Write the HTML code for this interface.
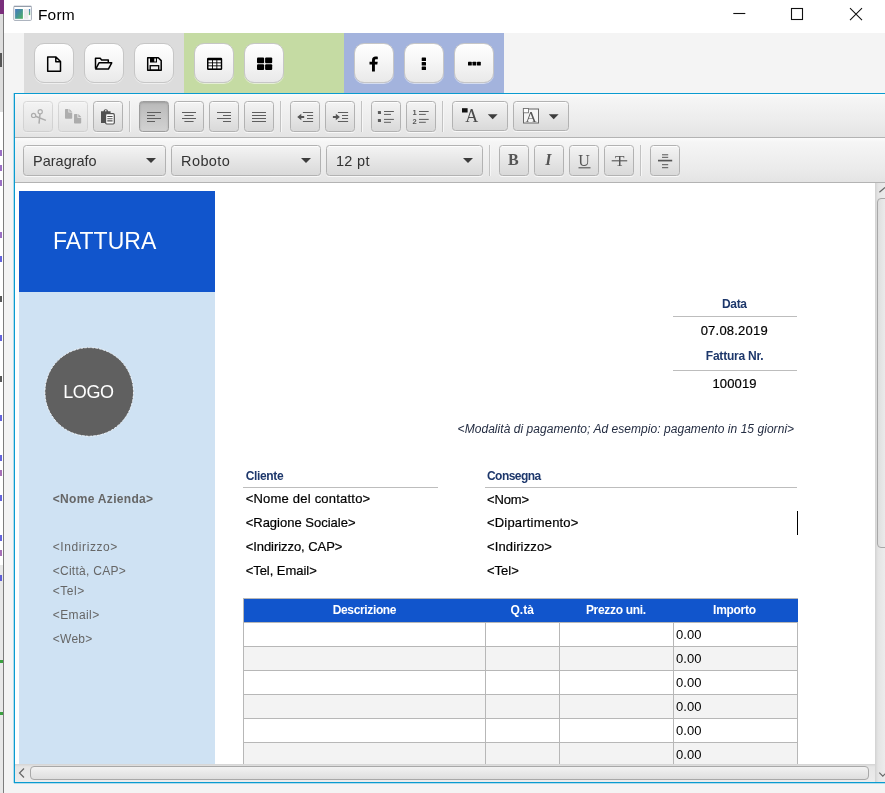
<!DOCTYPE html>
<html lang="it">
<head>
<meta charset="utf-8">
<title>Form</title>
<style>
*{box-sizing:border-box;margin:0;padding:0}
html,body{width:885px;height:793px;overflow:hidden;background:#f4f4f4;font-family:"Liberation Sans",sans-serif}
.abs{position:absolute}
#root{will-change:transform;position:relative;width:885px;height:793px;overflow:hidden;background:#f4f4f4}
#strip{left:0;top:0;width:4px;height:793px;background:#f0f0f0}
#strip i{position:absolute;left:0;display:block}
#title{left:4px;top:0;width:881px;height:33px;background:#fff}
#title .cap{left:34px;top:5px;font-size:15.5px;color:#000;line-height:20px;letter-spacing:.15px}
.panel{top:33px;height:60px;width:160px}
.rb{position:absolute;top:10px;width:40px;height:40px;border:1px solid #c6c6c6;border-radius:10px;background:linear-gradient(#ffffff,#f6f6f6 45%,#e9e9e9);box-shadow:0 1px 0 rgba(255,255,255,.55)}
.rb svg{position:absolute;left:-1px;top:-1px}
#ed{left:14px;top:93px;width:880px;height:690px;border:1px solid #0a9bd0;border-right:0;background:#fff;box-shadow:-1px 0 0 rgba(3,158,211,.28)}
.tb{left:15px;width:870px;background:linear-gradient(#fbfbfb,#f5f5f5 10%,#ebebeb 70%,#e4e4e4);border-bottom:1px solid #b3b3b3}
.btn{position:absolute;top:7px;width:30px;height:31px;border:1px solid #b2b2b2;border-radius:3.5px;background:linear-gradient(#f4f4f4,#e6e6e6 50%,#d9d9d9);box-shadow:inset 0 1px 0 rgba(255,255,255,.8),0 1px 0 rgba(255,255,255,.7)}
.btn.sel{background:linear-gradient(#b9b9b9,#c6c6c6 50%,#d2d2d2);border-color:#9d9d9d;box-shadow:inset 0 1px 2px rgba(0,0,0,.15),0 1px 0 rgba(255,255,255,.7)}
.btn.dis{opacity:.42}
.btn svg{position:absolute;left:-1px;top:-1px}
.sep{position:absolute;top:7px;width:2px;height:31px;border-left:1px solid #c2c2c2;border-right:1px solid #f6f6f6}
.combo{position:absolute;top:7px;height:31px;border:1px solid #b2b2b2;border-radius:3.5px;background:linear-gradient(#f4f4f4,#e6e6e6 50%,#d9d9d9);box-shadow:inset 0 1px 0 rgba(255,255,255,.8),0 1px 0 rgba(255,255,255,.7);font-size:14.5px;color:#333;line-height:31px;padding-left:9px;white-space:nowrap}
.combo b{position:absolute;right:9px;top:12px;width:0;height:0;border-left:5px solid transparent;border-right:5px solid transparent;border-top:5px solid #3c3c3c}
#doc{left:15px;top:183px;width:860px;height:581px;background:#fff;overflow:hidden}
#doc .t{position:absolute;white-space:nowrap;line-height:16px;font-size:13px;color:#000}
#doc .t.r{-webkit-text-stroke:.2px currentColor}
#doc .hd{color:#1d376b;font-weight:bold}
#doc .side{color:#666;font-size:12px}
.ln{position:absolute;height:1px;background:#bdbdbd}
/*EXTRA*/
</style>
</head>
<body>
<div id="root">
<div id="strip" class="abs"><i style="top:0;width:4px;height:14px;background:#7a2f7c"></i><i style="top:14px;width:3px;height:98px;background:#dedede"></i><i style="top:112px;width:3px;height:453px;background:#fff"></i><i style="top:565px;width:3px;height:228px;background:#e8e8e8"></i><i style="top:14px;left:3px;width:1px;height:779px;background:#7d7d7d"></i><i style="top:53px;width:2px;height:14px;background:#555"></i><i style="top:150px;width:2px;height:6px;background:#7a3fb0;opacity:.75"></i><i style="top:165px;width:2px;height:6px;background:#7a3fb0;opacity:.75"></i><i style="top:180px;width:2px;height:6px;background:#7a3fb0;opacity:.75"></i><i style="top:232px;width:2px;height:6px;background:#7a3fb0;opacity:.75"></i><i style="top:256px;width:2px;height:6px;background:#3030d0;opacity:.75"></i><i style="top:296px;width:2px;height:6px;background:#222;opacity:.75"></i><i style="top:335px;width:2px;height:6px;background:#3030d0;opacity:.75"></i><i style="top:376px;width:2px;height:6px;background:#222;opacity:.75"></i><i style="top:415px;width:2px;height:6px;background:#3030d0;opacity:.75"></i><i style="top:455px;width:2px;height:6px;background:#3030d0;opacity:.75"></i><i style="top:470px;width:2px;height:6px;background:#8a3fa0;opacity:.75"></i><i style="top:495px;width:2px;height:6px;background:#3030d0;opacity:.75"></i><i style="top:535px;width:2px;height:6px;background:#3030d0;opacity:.75"></i><i style="top:550px;width:2px;height:6px;background:#8a3fa0;opacity:.75"></i><i style="top:575px;width:2px;height:6px;background:#3030d0;opacity:.75"></i><i style="top:660px;width:3px;height:3px;background:#3aa040"></i><i style="top:712px;width:3px;height:3px;background:#3aa040"></i></div>
<div id="title" class="abs">
  <svg class="abs" style="left:9px;top:5px" width="20" height="17" viewBox="0 0 20 17"><defs><linearGradient id="g1" x1="0" y1="0" x2="1" y2="1"><stop offset="0" stop-color="#4a78c0"/><stop offset=".45" stop-color="#44909a"/><stop offset="1" stop-color="#52b45c"/></linearGradient><linearGradient id="g2" x1="0" y1="0" x2="0" y2="1"><stop offset="0" stop-color="#4a78c8"/><stop offset="1" stop-color="#5cbc5c"/></linearGradient></defs><rect x=".8" y="1.400" width="17.600" height="14" rx=".8" fill="#fff" stroke="#a4acb8" stroke-width="1"/><path d="M.8 1.300h17.600" stroke="#8d96a4" stroke-width="1"/><rect x="2.100" y="4" width="7.800" height="9.800" fill="url(#g1)"/><rect x="10.900" y="4" width="4.400" height="9.800" fill="#ebebeb"/><rect x="15.850" y="4" width="1.350" height="6.100" fill="url(#g2)"/></svg>
  <div class="abs cap">Form</div>
  <svg class="abs" style="left:720px;top:0" width="161" height="33" viewBox="0 0 161 33" fill="none" stroke="#111" stroke-width="1.100"><path d="M9.300 13.500h12"/><rect x="67.500" y="8.500" width="11" height="11"/><path d="M126 8.200l12 12M138 8.200l-12 12"/></svg>
</div>

<div class="abs panel" style="left:24px;background:#dcdcdc">
  <div class="rb" style="left:10px"><svg width="40" height="40" viewBox="0 0 40 40"><path d="M13.700 14h8.300l4.500 4.500v9.700h-12.800z M21.800 14.200v4.600h4.600" fill="none" stroke="#000" stroke-width="1.500" stroke-linejoin="round"/></svg></div>
  <div class="rb" style="left:60px"><svg width="40" height="40" viewBox="0 0 40 40"><path d="M11.500 25.500v-10.200h4.700l1.400 1.700h6.700v2.600" fill="none" stroke="#000" stroke-width="1.500" stroke-linejoin="round"/><path d="M11.700 26.100l3.300-6.300h12.700l-3.300 6.300z" fill="none" stroke="#000" stroke-width="1.500" stroke-linejoin="round"/></svg></div>
  <div class="rb" style="left:110px"><svg width="40" height="40" viewBox="0 0 40 40"><path d="M13.700 14.700h10.600l2.900 2.900v9.700h-13.500z" fill="none" stroke="#000" stroke-width="1.500" stroke-linejoin="round"/><rect x="16" y="14.500" width="7" height="5" fill="#000"/><rect x="20.300" y="15.500" width="1.600" height="3" fill="#fff"/><rect x="16.200" y="22.700" width="8.500" height="4.500" fill="none" stroke="#000" stroke-width="1.300"/></svg></div>
</div>
<div class="abs panel" style="left:184px;background:#c5dba3">
  <div class="rb" style="left:10px"><svg width="40" height="40" viewBox="0 0 40 40"><rect x="13" y="14.800" width="15.200" height="12.200" rx="1.300" fill="#000"/><g fill="#fff"><rect x="14.500" y="17.300" width="3.500" height="2.100"/><rect x="18.900" y="17.300" width="3.500" height="2.100"/><rect x="23.300" y="17.300" width="3.500" height="2.100"/><rect x="14.500" y="20.300" width="3.500" height="2.100"/><rect x="18.900" y="20.300" width="3.500" height="2.100"/><rect x="23.300" y="20.300" width="3.500" height="2.100"/><rect x="14.500" y="23.300" width="3.500" height="2.100"/><rect x="18.900" y="23.300" width="3.500" height="2.100"/><rect x="23.300" y="23.300" width="3.500" height="2.100"/></g></svg></div>
  <div class="rb" style="left:60px"><svg width="40" height="40" viewBox="0 0 40 40" fill="#000"><rect x="13" y="14.500" width="7.100" height="5.700" rx="1"/><rect x="21.100" y="14.500" width="7.100" height="5.700" rx="1"/><rect x="13" y="21.200" width="7.100" height="5.700" rx="1"/><rect x="21.100" y="21.200" width="7.100" height="5.700" rx="1"/></svg></div>
</div>
<div class="abs panel" style="left:344px;background:#a3b3dd">
  <div class="rb" style="left:10px"><svg width="40" height="40" viewBox="0 0 40 40"><path d="M18 28.400v-6.900h-2.500v-2.700h2.500v-1.600c0-2.300 1.400-3.600 3.500-3.600 1 0 1.900.1 2.300.1v2.500h-1.500c-1.100 0-1.400.5-1.400 1.300v1.300h2.800l-.4 2.700h-2.400v6.900z" fill="#000"/></svg></div>
  <div class="rb" style="left:60px"><svg width="40" height="40" viewBox="0 0 40 40" fill="#000"><rect x="17.700" y="14.500" width="4.300" height="3.500" rx=".6"/><rect x="17.700" y="19" width="4.300" height="3.500" rx=".6"/><rect x="17.700" y="23.500" width="4.300" height="3.500" rx=".6"/></svg></div>
  <div class="rb" style="left:110px"><svg width="40" height="40" viewBox="0 0 40 40" fill="#000"><rect x="14" y="18.700" width="3.800" height="3.800" rx=".6"/><rect x="18.500" y="18.700" width="3.800" height="3.800" rx=".6"/><rect x="23" y="18.700" width="3.800" height="3.800" rx=".6"/></svg></div>
</div>
<div id="ed" class="abs"></div>
<div class="abs tb" style="top:94px;height:44px">
<div class="btn dis" style="left:8px;width:30px"><svg width="30" height="30" viewBox="0 0 30 30"><g fill="none" stroke="#555" stroke-width="1.2"><circle cx="10.600" cy="14.400" r="2.100"/><circle cx="17.200" cy="10.700" r="2.100"/><path d="M12.500 15.300l10.400 4.100M17 12.800l-1 9.800" stroke-width="1.500"/></g></svg></div>
<div class="btn dis" style="left:43px;width:30px"><svg width="30" height="30" viewBox="0 0 30 30"><g fill="#555"><path d="M7.800 7.900h2.600v3.700h3.800v5.400q0 .8-.8.800h-5.600q-.8 0-.8-.8v-8.300q0-.8.800-.8z"/><path d="M11.300 7.900l2.900 2.900h-2.900z"/><path d="M16.800 13h2.600v3.700h3.800v5q0 .8-.8.800h-5.600q-.8 0-.8-.8v-7.900q0-.8.800-.8z"/><path d="M20.300 13l2.900 2.900h-2.900z"/></g></svg></div>
<div class="btn " style="left:78px;width:30px"><svg width="30" height="30" viewBox="0 0 30 30"><g><path d="M8 10.300h2.500c.2-1.300 1-2 2.300-2s2.100.7 2.300 2h2.500v2h-3.300v9.700h-6.300z" fill="#505050"/><rect x="12.600" y="12.700" width="8.700" height="10.300" rx="1.200" fill="#fff" stroke="#505050" stroke-width="1.200"/><path d="M14.300 15.500h5.300M14.300 17.700h5.300M14.300 19.900h5.300" stroke="#505050" stroke-width="1.100"/><circle cx="12.800" cy="9.800" r=".8" fill="#e6e6e6"/></g></svg></div>
<div class="sep" style="left:114px"></div>
<div class="btn sel" style="left:124px;width:30px"><svg width="30" height="30" viewBox="0 0 30 30"><g stroke="#5e5e5e" stroke-width="1" fill="none"><path d="M8 11.5H22"/><path d="M8 14.5H16"/><path d="M8 17.5H22"/><path d="M8 20.5H16"/></g></svg></div>
<div class="btn " style="left:159px;width:30px"><svg width="30" height="30" viewBox="0 0 30 30"><g stroke="#5e5e5e" stroke-width="1" fill="none"><path d="M8 11.5H22"/><path d="M10.4 14.5H19.6"/><path d="M8 17.5H22"/><path d="M10.4 20.5H19.6"/></g></svg></div>
<div class="btn " style="left:194px;width:30px"><svg width="30" height="30" viewBox="0 0 30 30"><g stroke="#5e5e5e" stroke-width="1" fill="none"><path d="M8 11.5H22"/><path d="M14 14.5H22"/><path d="M8 17.5H22"/><path d="M14 20.5H22"/></g></svg></div>
<div class="btn " style="left:229px;width:30px"><svg width="30" height="30" viewBox="0 0 30 30"><g stroke="#5e5e5e" stroke-width="1" fill="none"><path d="M8 11.5H22"/><path d="M8 14.5H22"/><path d="M8 17.5H22"/><path d="M8 20.5H22"/></g></svg></div>
<div class="sep" style="left:265px"></div>
<div class="btn " style="left:275px;width:30px"><svg width="30" height="30" viewBox="0 0 30 30"><g stroke="#5e5e5e" stroke-width="1" fill="none"><path d="M12.9 11.5H23.1"/><path d="M17 14.5H23.1"/><path d="M17 17.5H23.1"/><path d="M12.9 20.5H23.1"/></g><path d="M7.200 16l4.100-3.300v2.200h2.900v2.200h-2.900v2.200z" fill="#555"/></svg></div>
<div class="btn " style="left:310px;width:30px"><svg width="30" height="30" viewBox="0 0 30 30"><g stroke="#5e5e5e" stroke-width="1" fill="none"><path d="M12.9 11.5H23.1"/><path d="M17 14.5H23.1"/><path d="M17 17.5H23.1"/><path d="M12.9 20.5H23.1"/></g><path d="M14.900 16l-4.100-3.300v2.200h-2.900v2.200h2.900v2.200z" fill="#555"/></svg></div>
<div class="sep" style="left:346px"></div>
<div class="btn " style="left:356px;width:30px"><svg width="30" height="30" viewBox="0 0 30 30"><g stroke="#5e5e5e" stroke-width="1" fill="none"><path d="M13 10.5H22.9"/><path d="M13 13.4H20"/><path d="M13 18.4H22.9"/><path d="M13 21.3H20"/></g><rect x="6.900" y="10" width="3.100" height="3" rx=".5" fill="#5a5a5a"/><rect x="6.900" y="18" width="3.100" height="3" rx=".5" fill="#5a5a5a"/></svg></div>
<div class="btn " style="left:391px;width:30px"><svg width="30" height="30" viewBox="0 0 30 30"><g stroke="#5e5e5e" stroke-width="1" fill="none"><path d="M13 10.5H22.7"/><path d="M13 13.4H19.8"/><path d="M13 18.4H22.7"/><path d="M13 21.3H19.8"/></g><text x="6.500" y="13.600" font-family="Liberation Sans,sans-serif" font-size="7.500" font-weight="bold" fill="#555">1</text><text x="6.500" y="22.800" font-family="Liberation Sans,sans-serif" font-size="7.500" font-weight="bold" fill="#555">2</text></svg></div>
<div class="sep" style="left:427px"></div>
<div class="btn " style="left:437px;width:56px;height:30px"><svg width="56" height="30" viewBox="0 0 56 30"><rect x="10" y="7.200" width="5.600" height="4.300" fill="#111"/><text x="13.200" y="21.400" font-family="Liberation Serif,serif" font-size="18" fill="#4a4a4a">A</text><path d="M35.800 13.300h9.800l-4.900 5z" fill="#3c3c3c"/></svg></div>
<div class="btn " style="left:498px;width:56px;height:30px"><svg width="56" height="30" viewBox="0 0 56 30"><rect x="10.500" y="8" width="15" height="14" fill="#f4f4f4" stroke="#666" stroke-width="1"/><text x="12.400" y="20.700" font-family="Liberation Serif,serif" font-size="15.500" fill="#555">A</text><rect x="10.300" y="7.500" width="5.200" height="4.300" fill="#fff" stroke="#666" stroke-width=".8"/><path d="M35.800 13.300h9.800l-4.900 5z" fill="#3c3c3c"/></svg></div>
</div>
<div class="abs tb" style="top:138px;height:45px">
<div class="combo" style="left:8px;width:143px">Paragrafo<b></b></div>
<div class="combo" style="left:156px;width:150px"><span style="letter-spacing:.42px">Roboto</span><b></b></div>
<div class="combo" style="left:311px;width:157px"><span style="letter-spacing:.3px">12 pt</span><b></b></div>
<div class="sep" style="left:474px"></div>
<div class="btn " style="left:484px;width:30px"><svg width="30" height="30" viewBox="0 0 30 30"><text x="9.100" y="20.300" font-family="Liberation Serif,serif" font-size="16" font-weight="bold" fill="#555">B</text></svg></div>
<div class="btn " style="left:519px;width:30px"><svg width="30" height="30" viewBox="0 0 30 30"><text x="11.300" y="20.300" font-family="Liberation Serif,serif" font-size="16" font-style="italic" font-weight="bold" fill="#555">I</text></svg></div>
<div class="btn " style="left:554px;width:30px"><svg width="30" height="30" viewBox="0 0 30 30"><text x="9.200" y="20.700" font-family="Liberation Serif,serif" font-size="16" fill="#555">U</text><path d="M9.500 22.800h12" stroke="#555" stroke-width="1.100"/></svg></div>
<div class="btn " style="left:589px;width:30px"><svg width="30" height="30" viewBox="0 0 30 30"><text x="10.900" y="20.700" font-family="Liberation Serif,serif" font-size="15.500" fill="#555">T</text><path d="M7.700 15.800h15.500" stroke="#555" stroke-width="1.100"/></svg></div>
<div class="sep" style="left:625px"></div>
<div class="btn " style="left:635px;width:30px"><svg width="30" height="30" viewBox="0 0 30 30"><g stroke="#555" fill="none"><path d="M8 15.600h14.200" stroke-width="1.700"/><path d="M12 9.800h6.200M12 12.300h6.200M12 19.700h6.200M12 22.700h6.200" stroke-width="1"/></g></svg></div>
</div>
<div id="doc" class="abs">
<div class="abs" style="left:4px;top:8px;width:196px;height:101px;background:#1155cc;"></div>
<div class="abs" style="left:4px;top:109px;width:196px;height:480px;background:#cfe2f3;"></div>
<svg class="abs" style="left:25px;top:160px" width="98" height="98" viewBox="0 0 98 98"><circle cx="49.200" cy="48.900" r="44.300" fill="#606060" stroke="#f4f7fb" stroke-width=".9" stroke-dasharray="2.500 1.200"/></svg>
<div class="t " style="top:50.00px;font-size:23px;letter-spacing:0.048px;left:37.98px;color:#fff;">FATTURA</div>
<div class="t " style="top:201.00px;font-size:18px;letter-spacing:-0.438px;left:48.28px;color:#fff;">LOGO</div>
<div class="t side" style="top:308.00px;font-size:12px;letter-spacing:0.313px;left:37.72px;font-weight:bold;">&lt;Nome Azienda&gt;</div>
<div class="t side" style="top:356.00px;font-size:12px;letter-spacing:0.595px;left:37.72px;">&lt;Indirizzo&gt;</div>
<div class="t side" style="top:380.00px;font-size:12px;letter-spacing:0.267px;left:37.72px;">&lt;Città, CAP&gt;</div>
<div class="t side" style="top:400.00px;font-size:12px;letter-spacing:0.557px;left:37.72px;">&lt;Tel&gt;</div>
<div class="t side" style="top:424.00px;font-size:12px;letter-spacing:0.403px;left:37.72px;">&lt;Email&gt;</div>
<div class="t side" style="top:448.00px;font-size:12px;letter-spacing:0.273px;left:37.72px;">&lt;Web&gt;</div>
<div class="t hd" style="top:113.00px;font-size:12px;letter-spacing:-0.293px;left:706.92px;font-weight:bold;">Data</div>
<div class="abs" style="left:658px;top:133px;width:124px;height:1px;background:#bdbdbd;"></div>
<div class="t r" style="top:140.00px;font-size:13px;letter-spacing:0.215px;left:685.68px;">07.08.2019</div>
<div class="t hd" style="top:165.00px;font-size:12px;letter-spacing:-0.225px;left:690.82px;font-weight:bold;">Fattura Nr.</div>
<div class="abs" style="left:658px;top:187px;width:124px;height:1px;background:#bdbdbd;"></div>
<div class="t r" style="top:193.00px;font-size:13px;letter-spacing:0.155px;left:697.38px;">100019</div>
<div class="t " style="top:238.00px;font-size:12px;letter-spacing:0.047px;left:442.62px;font-style:italic;color:#242d42;">&lt;Modalità di pagamento; Ad esempio: pagamento in 15 giorni&gt;</div>
<div class="t hd" style="top:285.00px;font-size:12px;letter-spacing:-0.338px;left:230.72px;font-weight:bold;">Cliente</div>
<div class="abs" style="left:228px;top:304px;width:195px;height:1px;background:#bdbdbd;"></div>
<div class="t r" style="top:308.00px;font-size:13px;letter-spacing:0.212px;left:230.68px;">&lt;Nome del contatto&gt;</div>
<div class="t r" style="top:332.00px;font-size:13px;letter-spacing:-0.003px;left:230.68px;">&lt;Ragione Sociale&gt;</div>
<div class="t r" style="top:356.00px;font-size:13px;letter-spacing:-0.058px;left:230.68px;">&lt;Indirizzo, CAP&gt;</div>
<div class="t r" style="top:380.00px;font-size:13px;letter-spacing:-0.044px;left:230.68px;">&lt;Tel, Email&gt;</div>
<div class="t hd" style="top:285.00px;font-size:12px;letter-spacing:-0.559px;left:472.02px;font-weight:bold;">Consegna</div>
<div class="abs" style="left:470px;top:304px;width:312px;height:1px;background:#bdbdbd;"></div>
<div class="t r" style="top:309.00px;font-size:13px;letter-spacing:-0.104px;left:471.98px;">&lt;Nom&gt;</div>
<div class="t r" style="top:332.00px;font-size:13px;letter-spacing:0.195px;left:471.98px;">&lt;Dipartimento&gt;</div>
<div class="t r" style="top:356.00px;font-size:13px;letter-spacing:0.129px;left:471.98px;">&lt;Indirizzo&gt;</div>
<div class="t r" style="top:380.00px;font-size:13px;letter-spacing:0.022px;left:471.98px;">&lt;Tel&gt;</div>
<div class="abs" style="left:782px;top:328px;width:1px;height:24px;background:#000;"></div>
<div class="abs" style="left:228px;top:415px;width:555px;height:24px;background:#1155cc;border-top:1px solid #b7b7b7"></div>
<div class="abs" style="left:228px;top:439px;width:555px;height:24px;background:#fff;border-top:1px solid #b7b7b7"></div>
<div class="t " style="top:444.00px;font-size:13px;letter-spacing:0.052px;left:661.08px;">0.00</div>
<div class="abs" style="left:228px;top:463px;width:555px;height:24px;background:#f3f3f3;border-top:1px solid #b7b7b7"></div>
<div class="t " style="top:468.00px;font-size:13px;letter-spacing:0.052px;left:661.08px;">0.00</div>
<div class="abs" style="left:228px;top:487px;width:555px;height:24px;background:#fff;border-top:1px solid #b7b7b7"></div>
<div class="t " style="top:492.00px;font-size:13px;letter-spacing:0.052px;left:661.08px;">0.00</div>
<div class="abs" style="left:228px;top:511px;width:555px;height:24px;background:#f3f3f3;border-top:1px solid #b7b7b7"></div>
<div class="t " style="top:516.00px;font-size:13px;letter-spacing:0.052px;left:661.08px;">0.00</div>
<div class="abs" style="left:228px;top:535px;width:555px;height:24px;background:#fff;border-top:1px solid #b7b7b7"></div>
<div class="t " style="top:540.00px;font-size:13px;letter-spacing:0.052px;left:661.08px;">0.00</div>
<div class="abs" style="left:228px;top:559px;width:555px;height:24px;background:#f3f3f3;border-top:1px solid #b7b7b7"></div>
<div class="t " style="top:564.00px;font-size:13px;letter-spacing:0.052px;left:661.08px;">0.00</div>
<div class="abs" style="left:228px;top:583px;width:555px;height:24px;background:#fff;border-top:1px solid #b7b7b7"></div>
<div class="t " style="top:588.00px;font-size:13px;letter-spacing:0.052px;left:661.08px;">0.00</div>
<div class="abs" style="left:228px;top:439px;width:1px;height:160px;background:#b7b7b7;"></div>
<div class="abs" style="left:470px;top:439px;width:1px;height:160px;background:#b7b7b7;"></div>
<div class="abs" style="left:544px;top:439px;width:1px;height:160px;background:#b7b7b7;"></div>
<div class="abs" style="left:658px;top:439px;width:1px;height:160px;background:#b7b7b7;"></div>
<div class="abs" style="left:782px;top:439px;width:1px;height:160px;background:#b7b7b7;"></div>
<div class="abs" style="left:228px;top:415px;width:1px;height:24px;background:#b7b7b7;"></div>
<div class="t " style="top:419.00px;font-size:12px;letter-spacing:-0.356px;left:317.72px;font-weight:bold;color:#fff;">Descrizione</div>
<div class="t " style="top:419.00px;font-size:12px;letter-spacing:0.026px;left:495.42px;font-weight:bold;color:#fff;">Q.tà</div>
<div class="t " style="top:419.00px;font-size:12px;letter-spacing:-0.309px;left:570.92px;font-weight:bold;color:#fff;">Prezzo uni.</div>
<div class="t " style="top:419.00px;font-size:12px;letter-spacing:-0.289px;left:698.12px;font-weight:bold;color:#fff;">Importo</div>
</div>
<div class="abs" style="left:875px;top:183px;width:10px;height:599px;background:linear-gradient(90deg,#d2d2d2,#e4e4e4 3px,#ececec)"></div>
<div class="abs" style="left:877px;top:198px;width:12px;height:350px;border:1px solid #a8a8a8;border-radius:4px;background:linear-gradient(90deg,#dedede,#f0f0f0)"></div>
<svg class="abs" style="left:875px;top:183px" width="10" height="14" viewBox="0 0 10 14"><path d="M4.400 9.200l5.600-4.800" stroke="#666" stroke-width="1.200" fill="none"/></svg>
<svg class="abs" style="left:875px;top:768px" width="10" height="14" viewBox="0 0 10 14"><path d="M4.300 4.700l3.500 3.500l3.200-3.200" stroke="#666" stroke-width="1.200" fill="none"/></svg>
<div class="abs" style="left:15px;top:764px;width:860px;height:18px;background:linear-gradient(#d4d4d4,#e6e6e6 3px,#ececec)"></div>
<div class="abs" style="left:30px;top:766px;width:839px;height:14px;border:1px solid #a8a8a8;border-radius:4px;background:linear-gradient(#f2f2f2,#dedede)"></div>
<svg class="abs" style="left:15px;top:764px" width="15" height="18" viewBox="0 0 15 18"><path d="M9 4.500l-4.500 4.500l4.500 4.500" stroke="#666" stroke-width="1.200" fill="none"/></svg>
<div class="abs" style="left:14px;top:782px;width:871px;height:1px;background:#0a9bd0;box-shadow:0 1px 0 rgba(3,158,211,.28)"></div>
</div>
</body>
</html>
